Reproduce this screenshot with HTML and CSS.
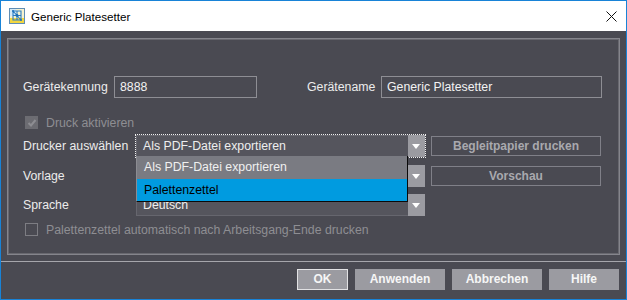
FILE: index.html
```html
<!DOCTYPE html>
<html lang="de">
<head>
<meta charset="utf-8">
<title>Generic Platesetter</title>
<link rel="stylesheet" href="styles.css">
</head>
<body>
<div class="window">
  <div class="titlebar">
    <svg class="app-icon" width="16" height="16" viewBox="0 0 16 16">
      <rect x="0.5" y="0.5" width="15" height="15" fill="#f6f2d0" stroke="#5f8db4"/>
      <rect x="1" y="10" width="14" height="5" fill="#f2d640"/>
      <rect x="1" y="1" width="6" height="7" fill="#d4eaf8"/>
      <path d="M4 3 L12 3 L12 12 L4 12 Z M4 7.5 L12 7.5 M8 3 L8 12 M4 3 L12 12" fill="none" stroke="#2a7cc4" stroke-width="1.1"/>
      <circle cx="8" cy="7.5" r="1.4" fill="#1b6fb8"/>
      <circle cx="4" cy="3" r="1" fill="#1b6fb8"/>
      <circle cx="12" cy="12" r="1" fill="#1b6fb8"/>
    </svg>
    <span class="title">Generic Platesetter</span>
    <svg class="close" width="11" height="11" viewBox="0 0 11 11">
      <path d="M0.5 0.5 L10.5 10.5 M10.5 0.5 L0.5 10.5" stroke="#111" stroke-width="1"/>
    </svg>
  </div>
  <div class="content">
    <div class="panel">
      <div class="row row-fields">
        <span class="label label-id">Gerätekennung</span>
        <div class="input input-id">8888</div>
        <span class="label label-name">Gerätename</span>
        <div class="input input-name">Generic Platesetter</div>
      </div>
      <div class="row row-check first-check">
        <span class="checkbox checked">
          <svg width="10" height="10" viewBox="0 0 10 10"><path d="M1.5 5 L4 7.5 L8.5 2" fill="none" stroke="#8d8d92" stroke-width="2"/></svg>
        </span>
        <span class="check-text">Druck aktivieren</span>
      </div>
      <div class="row row-combo row-drucker">
        <span class="label label-combo">Drucker auswählen</span>
        <div class="combo-slot focused">
          <div class="combo">
            <span class="combo-text">Als PDF-Datei exportieren</span>
            <span class="combo-arrow"></span>
          </div>
          <div class="popup">
            <div class="popup-item">Als PDF-Datei exportieren</div>
            <div class="popup-item selected">Palettenzettel</div>
          </div>
        </div>
        <div class="side-button">Begleitpapier drucken</div>
      </div>
      <div class="row row-combo row-vorlage">
        <span class="label label-combo">Vorlage</span>
        <div class="combo-slot">
          <div class="combo">
            <span class="combo-text"></span>
            <span class="combo-arrow"></span>
          </div>
        </div>
        <div class="side-button">Vorschau</div>
      </div>
      <div class="row row-combo row-sprache">
        <span class="label label-combo">Sprache</span>
        <div class="combo-slot">
          <div class="combo">
            <span class="combo-text">Deutsch</span>
            <span class="combo-arrow"></span>
          </div>
        </div>
      </div>
      <div class="row row-check last-check">
        <span class="checkbox"></span>
        <span class="check-text">Palettenzettel automatisch nach Arbeitsgang-Ende drucken</span>
      </div>
    </div>
    <div class="separator"></div>
    <div class="buttons">
      <div class="btn btn-ok">OK</div>
      <div class="btn btn-wide">Anwenden</div>
      <div class="btn btn-wide">Abbrechen</div>
      <div class="btn btn-help">Hilfe</div>
    </div>
  </div>
</div>
</body>
</html>
```

FILE: styles.css
```css
html, body {
  margin: 0;
  padding: 0;
}

body {
  font-family: "Liberation Sans", Arial, sans-serif;
  font-size: 12.3px;
}

.window {
  width: 627px;
  height: 300px;
  box-sizing: border-box;
  border: 1px solid #1883d7;
  display: flex;
  flex-direction: column;
  overflow: hidden;
}

.titlebar {
  height: 30px;
  flex: none;
  background: #ffffff;
  display: flex;
  align-items: center;
}

.app-icon {
  margin-left: 8px;
  flex: none;
}

.title {
  margin-left: 6px;
  font-size: 11.6px;
  color: #000;
  flex: 1;
  padding-top: 1px;
}

.close {
  margin-right: 9px;
  flex: none;
}

.content {
  flex: 1;
  background: #4a4a52;
  display: flex;
  flex-direction: column;
}

.panel {
  margin: 7px 6px 0 6px;
  height: 217px;
  box-sizing: border-box;
  border: 1px solid #85858c;
  box-shadow: inset 0 0 0 1px #68686f;
  padding: 37px 0 0 15px;
  display: flex;
  flex-direction: column;
}

.row {
  display: flex;
  align-items: center;
}

.label {
  color: #ececec;
  white-space: nowrap;
}

.row-fields {
  height: 22px;
}

.label-id {
  width: 91px;
}

.input {
  box-sizing: border-box;
  height: 22px;
  border: 1px solid #8e8e94;
  color: #f2f2f2;
  padding-left: 5px;
  line-height: 20px;
}

.input-id {
  width: 143px;
}

.label-name {
  margin-left: 50px;
  width: 74px;
}

.input-name {
  width: 221px;
}

.row-check {
  height: 15px;
}

.first-check {
  margin-top: 17px;
}

.last-check {
  margin-top: 5px;
}

.checkbox {
  box-sizing: border-box;
  width: 13px;
  height: 13px;
  margin-left: 2px;
  border: 1px solid #7d7d83;
  display: flex;
  align-items: center;
  justify-content: center;
}

.checkbox.checked {
  background: #6c6c72;
  border-color: #6c6c72;
}

.check-text {
  margin-left: 8px;
  color: #8e8e93;
  white-space: nowrap;
}

.row-combo {
  height: 24px;
}

.row-drucker {
  margin-top: 4px;
}

.row-vorlage {
  margin-top: 6px;
}

.row-sprache {
  margin-top: 5px;
}

.label-combo {
  width: 112px;
}

.combo-slot {
  position: relative;
  box-sizing: border-box;
  width: 291px;
  height: 24px;
  border: 1px dotted transparent;
}

.combo-slot.focused {
  border-color: #f0f0f0;
}

.combo {
  box-sizing: border-box;
  height: 22px;
  background: #55555d;
  border: 1px solid #66666e;
  border-right: none;
  display: flex;
  align-items: center;
}

.combo-text {
  flex: 1;
  padding-left: 6px;
  color: #eeeeee;
  white-space: nowrap;
}

.combo-arrow {
  width: 17px;
  height: 22px;
  margin: -1px 0;
  background: #9b9ba1;
  position: relative;
  flex: none;
}

.combo-arrow::after {
  content: "";
  position: absolute;
  left: 4px;
  top: 9px;
  border-left: 4px solid transparent;
  border-right: 4px solid transparent;
  border-top: 5px solid #ffffff;
}

.popup {
  position: absolute;
  z-index: 5;
  left: 0;
  top: 21px;
  width: 272px;
  box-sizing: border-box;
  border-right: 1px solid #0a0a0a;
  border-bottom: 1px solid #0a0a0a;
  border-left: 1px solid #8c8c92;
}

.popup-item {
  height: 23px;
  line-height: 23px;
  padding-left: 7px;
  background: #7a7b82;
  color: #f0f0f0;
  white-space: nowrap;
}

.popup-item.selected {
  height: 22px;
  line-height: 22px;
  background: #009be0;
  color: #000;
}

.side-button {
  box-sizing: border-box;
  margin-left: 5px;
  width: 170px;
  height: 20px;
  border: 1px solid #808088;
  color: #a9a9ae;
  font-size: 12px;
  font-weight: bold;
  text-align: center;
  line-height: 18px;
}

.separator {
  margin-top: 6px;
  height: 1px;
  background: #a6a6ac;
}

.buttons {
  margin-top: 7px;
  padding-right: 7px;
  display: flex;
  justify-content: flex-end;
  gap: 7px;
}

.btn {
  box-sizing: border-box;
  height: 21px;
  background: #9b9ba1;
  color: #f6f6f6;
  font-size: 12px;
  font-weight: bold;
  text-align: center;
  line-height: 21px;
}

.btn-ok {
  width: 51px;
  border: 1px solid #e2e2e4;
  line-height: 19px;
}

.btn-wide {
  width: 90px;
}

.btn-help {
  width: 70px;
}
```
